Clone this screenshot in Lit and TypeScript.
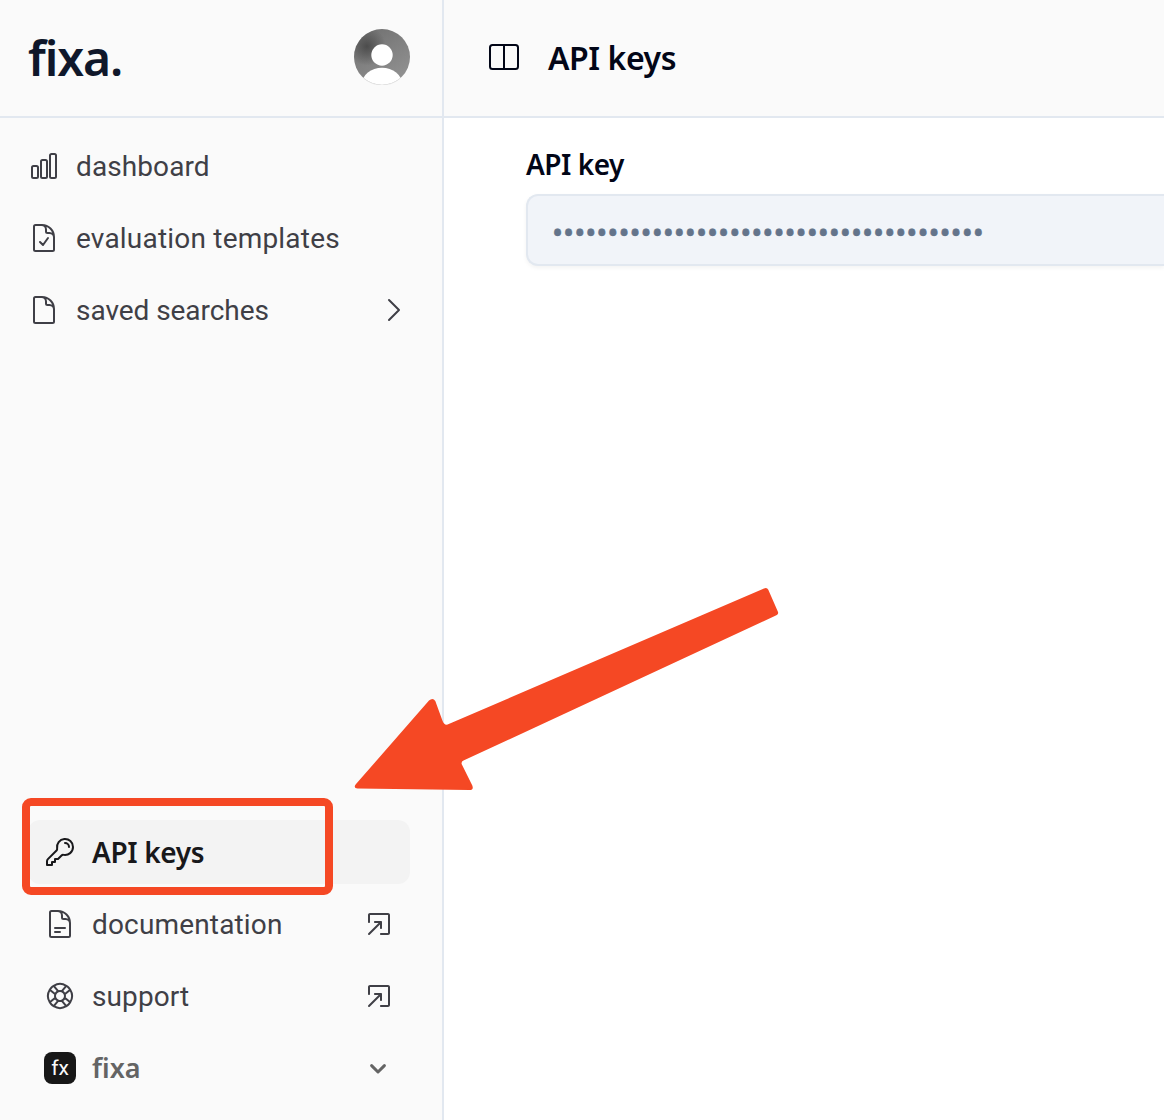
import { LitElement, html, css, svg, nothing } from "lit";
import { customElement, property } from "lit/decorators.js";

const ICONS: Record<string, string> = {
  chart:
    "M3 13.125C3 12.504 3.504 12 4.125 12h2.25c.621 0 1.125.504 1.125 1.125v6.75C7.5 20.496 6.996 21 6.375 21h-2.25A1.125 1.125 0 0 1 3 19.875v-6.75ZM9.75 8.625c0-.621.504-1.125 1.125-1.125h2.25c.621 0 1.125.504 1.125 1.125v11.25c0 .621-.504 1.125-1.125 1.125h-2.25a1.125 1.125 0 0 1-1.125-1.125V8.625ZM16.5 4.125c0-.621.504-1.125 1.125-1.125h2.25C20.496 3 21 3.504 21 4.125v15.75c0 .621-.504 1.125-1.125 1.125h-2.25a1.125 1.125 0 0 1-1.125-1.125V4.125Z",
  documentCheck:
    "M10.125 2.25h-4.5c-.621 0-1.125.504-1.125 1.125v17.25c0 .621.504 1.125 1.125 1.125h12.75c.621 0 1.125-.504 1.125-1.125v-9M10.125 2.25h.375a9 9 0 0 1 9 9v.375M10.125 2.25A3.375 3.375 0 0 1 13.5 5.625v1.5c0 .621.504 1.125 1.125 1.125h1.5a3.375 3.375 0 0 1 3.375 3.375M9 15l2.25 2.25L15 12",
  document:
    "M19.5 14.25v-2.625a3.375 3.375 0 0 0-3.375-3.375h-1.5A1.125 1.125 0 0 1 13.5 7.125v-1.5a3.375 3.375 0 0 0-3.375-3.375H8.25m2.25 0H5.625c-.621 0-1.125.504-1.125 1.125v17.25c0 .621.504 1.125 1.125 1.125h12.75c.621 0 1.125-.504 1.125-1.125V11.25a9 9 0 0 0-9-9Z",
  documentText:
    "M19.5 14.25v-2.625a3.375 3.375 0 0 0-3.375-3.375h-1.5A1.125 1.125 0 0 1 13.5 7.125v-1.5a3.375 3.375 0 0 0-3.375-3.375H8.25m0 12.75h7.5m-7.5 3H12M10.5 2.25H5.625c-.621 0-1.125.504-1.125 1.125v17.25c0 .621.504 1.125 1.125 1.125h12.75c.621 0 1.125-.504 1.125-1.125V11.25a9 9 0 0 0-9-9Z",
  key: "M15.75 5.25a3 3 0 0 1 3 3m3 0a6 6 0 0 1-7.029 5.912c-.563-.097-1.159.026-1.563.43L10.5 17.25H8.25v2.25H6v2.25H2.25v-2.818c0-.597.237-1.17.659-1.591l6.499-6.499c.404-.404.527-1 .43-1.563A6 6 0 1 1 21.75 8.25Z",
  lifebuoy:
    "M16.712 4.33a9.027 9.027 0 0 1 1.652 1.306c.51.51.944 1.064 1.306 1.652M16.712 4.33l-3.448 4.138m3.448-4.138a9.014 9.014 0 0 0-9.424 0M19.67 7.288l-4.138 3.448m4.138-3.448a9.014 9.014 0 0 1 0 9.424m-4.138-5.976a3.736 3.736 0 0 0-.88-1.388 3.737 3.737 0 0 0-1.388-.88m2.268 2.268a3.765 3.765 0 0 1 0 2.528m-2.268-4.796a3.765 3.765 0 0 0-2.528 0m4.796 4.796c-.181.506-.475.982-.88 1.388a3.736 3.736 0 0 1-1.388.88m2.268-2.268 4.138 3.448m0 0a9.027 9.027 0 0 1-1.306 1.652c-.51.51-1.064.944-1.652 1.306m0 0-3.448-4.138m3.448 4.138a9.014 9.014 0 0 1-9.424 0m5.976-4.138a3.765 3.765 0 0 1-2.528 0m0 0a3.736 3.736 0 0 1-1.388-.88 3.737 3.737 0 0 1-.88-1.388m2.268 2.268L7.288 19.67m0 0a9.024 9.024 0 0 1-1.652-1.306 9.027 9.027 0 0 1-1.306-1.652m0 0 4.138-3.448M4.33 16.712a9.014 9.014 0 0 1 0-9.424m4.138 5.976a3.765 3.765 0 0 1 0-2.528m0 0c.181-.506.475-.982.88-1.388a3.736 3.736 0 0 1 1.388-.88m-2.268 2.268L4.33 7.288m6.406 1.18L7.288 4.33m0 0a9.024 9.024 0 0 0-1.652 1.306A9.025 9.025 0 0 0 4.33 7.288",
  chevronRight: "m8.25 4.5 7.5 7.5-7.5 7.5",
};

const icon = (name: string) => svg`
  <svg width="32" height="32" viewBox="0 0 24 24" fill="none" stroke="currentColor"
    stroke-width="1.5" stroke-linecap="round" stroke-linejoin="round"><path d=${ICONS[name]}></path></svg>`;

const openIcon = svg`
  <svg width="30" height="30" viewBox="0 0 15 15" fill="currentColor">
    <path fill-rule="evenodd" clip-rule="evenodd" d="M12 13C12.5523 13 13 12.5523 13 12V3C13 2.44771 12.5523 2 12 2H3C2.44771 2 2 2.44771 2 3V6.5C2 6.77614 2.22386 7 2.5 7C2.77614 7 3 6.77614 3 6.5V3H12V12H8.5C8.22386 12 8 12.2239 8 12.5C8 12.7761 8.22386 13 8.5 13H12ZM9 6.5V9.5C9 9.77614 8.77614 10 8.5 10C8.22386 10 8 9.77614 8 9.5V7.70711L2.85355 12.8536C2.65829 13.0488 2.34171 13.0488 2.14645 12.8536C1.95118 12.6583 1.95118 12.3417 2.14645 12.1464L7.29289 7H5.5C5.22386 7 5 6.77614 5 6.5C5 6.22386 5.22386 6 5.5 6H8.5C8.77614 6 9 6.22386 9 6.5Z"></path>
  </svg>`;

const baseStyles = css`
  * {
    box-sizing: border-box;
  }
  svg {
    display: block;
    flex: none;
  }
`;

@customElement("nav-item")
export class NavItem extends LitElement {
  @property() icon = "";
  @property() label = "";
  @property() trailing = "";
  @property({ type: Boolean, reflect: true }) inset = false;
  @property({ type: Boolean, reflect: true }) active = false;
  @property({ type: Number }) tracking = 0;

  static styles = [
    baseStyles,
    css`
      :host {
        display: flex;
        align-items: center;
        gap: 16px;
        height: 64px;
        border-radius: 12px;
        color: #3f3f46;
        font-size: 28px;
        line-height: 32px;
      }
      :host([inset]) {
        padding: 0 16px;
      }
      :host([active]) {
        background: #f3f3f3;
        color: #18181b;
        font-family: "Noto Sans", sans-serif;
        font-weight: 600;
      }
      .label {
        flex: 1;
        padding-top: 2px;
        white-space: nowrap;
      }
      :host([active]) .label {
        padding-top: 0;
      }
    `,
  ];

  render() {
    return html`
      ${icon(this.icon)}
      <span class="label" style="letter-spacing:${this.tracking}px">${this.label}</span>
      ${this.trailing === "open" ? openIcon : this.trailing === "chevron" ? icon("chevronRight") : nothing}
    `;
  }
}

@customElement("app-root")
export class AppRoot extends LitElement {
  static styles = [
    baseStyles,
    css`
      :host {
        display: block;
        position: relative;
        height: 1120px;
        overflow: hidden;
        background: #fff;
        color: #020617;
        font-family: Roboto, sans-serif;
      }
      .layout {
        display: grid;
        grid-template-columns: 444px 1fr;
        height: 100%;
      }
      .sidebar {
        display: flex;
        flex-direction: column;
        background: #fafafa;
        border-right: 2px solid #e2e8f0;
      }
      .bar {
        display: flex;
        align-items: center;
        height: 118px;
        flex: none;
        border-bottom: 2px solid #e2e8f0;
        background: #fafafa;
      }
      .brand-bar {
        justify-content: space-between;
        padding: 0 32px 2px 28px;
      }
      .brand {
        color: #0f172a;
        font: 600 48px/56px "Noto Sans", sans-serif;
        letter-spacing: -1.1px;
        padding-top: 1px;
      }
      .menu {
        display: flex;
        flex-direction: column;
        gap: 8px;
      }
      .primary {
        padding: 16px 32px 0 28px;
      }
      .secondary {
        margin-top: auto;
        padding: 0 32px 20px 28px;
      }
      .account {
        display: flex;
        align-items: center;
        gap: 16px;
        height: 64px;
        padding: 0 16px;
        color: #646464;
      }
      .badge {
        display: grid;
        place-items: center;
        width: 32px;
        height: 32px;
        border-radius: 8px;
        background: #171717;
        color: #fafafa;
        font-size: 21px;
        line-height: 32px;
      }
      .account-name {
        flex: 1;
        font: 600 27px/32px "Noto Sans", sans-serif;
      }
      .title-bar {
        gap: 28px;
        padding: 0 44px 2px;
      }
      .title {
        margin: 0;
        padding-top: 1px;
        font: 600 32px/40px "Noto Sans", sans-serif;
        letter-spacing: -0.45px;
      }
      .content {
        display: flex;
        flex-direction: column;
        gap: 12px;
        padding: 28px 0 0 82px;
      }
      .field-label {
        font: 600 28px/36px "Noto Sans", sans-serif;
        letter-spacing: -0.5px;
      }
      .field {
        height: 72px;
        padding: 2px 0 0 24px;
        border: 2px solid #e2e8f0;
        border-right: 0;
        border-radius: 12px 0 0 12px;
        background: #f1f4f9;
        box-shadow: 0 2px 4px rgba(0, 0, 0, 0.05);
        color: #64748b;
        font: 400 29.5px/68px "Noto Sans", sans-serif;
        letter-spacing: -0.02px;
        -webkit-text-stroke: 0.5px #64748b;
        white-space: nowrap;
      }
      .annotation {
        position: absolute;
        left: 0;
        top: 0;
        pointer-events: none;
      }
    `,
  ];

  render() {
    return html`
      <div class="layout">
        <aside class="sidebar">
          <div class="bar brand-bar">
            <span class="brand">fixa.</span>
            <svg width="56" height="56" viewBox="0 0 56 56">
              <defs>
                <clipPath id="disc"><circle cx="28" cy="28" r="28"></circle></clipPath>
                <linearGradient id="tone" x1="0" y1="0" x2="0.6" y2="1">
                  <stop offset="0" stop-color="#6e6e6e"></stop>
                  <stop offset="1" stop-color="#909090"></stop>
                </linearGradient>
                <radialGradient id="shade" cx="0.23" cy="0.31" r="0.34">
                  <stop offset="0" stop-color="#4c4c4c"></stop>
                  <stop offset="1" stop-color="#4c4c4c" stop-opacity="0"></stop>
                </radialGradient>
              </defs>
              <g clip-path="url(#disc)">
                <rect width="56" height="56" fill="url(#tone)"></rect>
                <rect width="56" height="56" fill="url(#shade)"></rect>
                <circle cx="28" cy="26" r="10.7" fill="#fff"></circle>
                <ellipse cx="28" cy="55" rx="20" ry="16.2" fill="#fff"></ellipse>
              </g>
              <path d="M10 49.5A28 28 0 0 0 46 49.5" fill="none" stroke="#e2e2e2" stroke-width="0.8"></path>
            </svg>
          </div>
          <nav class="menu primary">
            <nav-item icon="chart" label="dashboard" .tracking=${0.1}></nav-item>
            <nav-item icon="documentCheck" label="evaluation templates" .tracking=${0.2}></nav-item>
            <nav-item icon="document" label="saved searches" trailing="chevron" .tracking=${-0.05}></nav-item>
          </nav>
          <nav class="menu secondary">
            <nav-item icon="key" label="API keys" inset active .tracking=${-0.38}></nav-item>
            <nav-item icon="documentText" label="documentation" trailing="open" inset .tracking=${0.16}></nav-item>
            <nav-item icon="lifebuoy" label="support" trailing="open" inset .tracking=${0.1}></nav-item>
            <div class="account">
              <span class="badge">fx</span>
              <span class="account-name">fixa</span>
              <svg width="32" height="32" viewBox="0 0 32 32" fill="none" stroke="currentColor"
                stroke-width="3" stroke-linecap="round" stroke-linejoin="round">
                <path d="M9.6 13.6L16 20L22.4 13.6"></path>
              </svg>
            </div>
          </nav>
        </aside>
        <main>
          <header class="bar title-bar">
            <svg width="32" height="32" viewBox="0 0 32 32" fill="none" stroke="currentColor" stroke-width="2">
              <rect x="2" y="4" width="28" height="24" rx="2.5"></rect>
              <path d="M16 4V28"></path>
            </svg>
            <h1 class="title">API keys</h1>
          </header>
          <section class="content">
            <div class="field-label">API key</div>
            <div class="field">${"•".repeat(39)}</div>
          </section>
        </main>
      </div>
      <svg class="annotation" width="1164" height="1120" viewBox="0 0 1164 1120">
        <rect x="26" y="802" width="303" height="89" rx="5" fill="none" stroke="#f54824" stroke-width="8"></rect>
        <path fill="#f54824" d="M764 588.4Q767 587 768.3 589.8L777.8 611.5Q779 614 776.4 615.2L463.5 760.6Q460.6 762 462 764.8L472.3 785.5Q474 790 469.5 790L357.5 788.6Q353 788 355.8 784.3L429 700.6Q432.8 697 435.3 701L442.4 720.5Q444 725.4 447.6 724.5Z"></path>
      </svg>
    `;
  }
}
